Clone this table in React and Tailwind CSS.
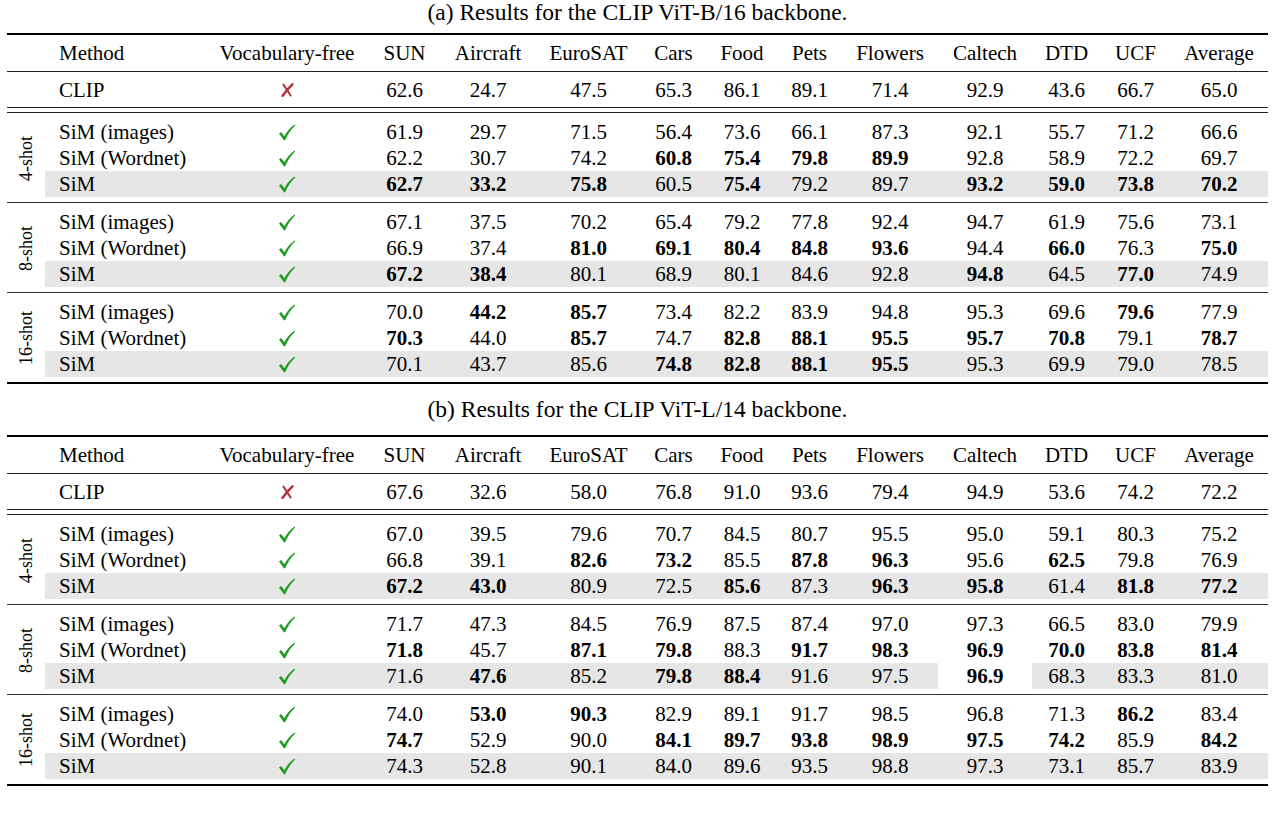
import React from "react";

const COLS =
  "grid grid-cols-[38px_159px_166px_69px_98px_103px_67px_70px_65px_96px_94px_69px_69px_98px]";
const SUBCOLS =
  "grid grid-cols-[159px_166px_69px_98px_103px_67px_70px_65px_96px_94px_69px_69px_98px]";

const HEAD = ["SUN", "Aircraft", "EuroSAT", "Cars", "Food", "Pets", "Flowers", "Caltech", "DTD", "UCF", "Average"];

const A = {
  caption: "(a) Results for the CLIP ViT-B/16 backbone.",
  clip: "62.6 24.7 47.5 65.3 86.1 89.1 71.4 92.9 43.6 66.7 65.0",
  groups: [
    {
      label: "4-shot",
      rows: [
        "61.9 29.7 71.5 56.4 73.6 66.1 87.3 92.1 55.7 71.2 66.6",
        "62.2 30.7 74.2 *60.8 *75.4 *79.8 *89.9 92.8 58.9 72.2 69.7",
        "*62.7 *33.2 *75.8 60.5 *75.4 79.2 89.7 *93.2 *59.0 *73.8 *70.2",
      ],
    },
    {
      label: "8-shot",
      rows: [
        "67.1 37.5 70.2 65.4 79.2 77.8 92.4 94.7 61.9 75.6 73.1",
        "66.9 37.4 *81.0 *69.1 *80.4 *84.8 *93.6 94.4 *66.0 76.3 *75.0",
        "*67.2 *38.4 80.1 68.9 80.1 84.6 92.8 *94.8 64.5 *77.0 74.9",
      ],
    },
    {
      label: "16-shot",
      rows: [
        "70.0 *44.2 *85.7 73.4 82.2 83.9 94.8 95.3 69.6 *79.6 77.9",
        "*70.3 44.0 *85.7 74.7 *82.8 *88.1 *95.5 *95.7 *70.8 79.1 *78.7",
        "70.1 43.7 85.6 *74.8 *82.8 *88.1 *95.5 95.3 69.9 79.0 78.5",
      ],
    },
  ],
};

const B = {
  caption: "(b) Results for the CLIP ViT-L/14 backbone.",
  clip: "67.6 32.6 58.0 76.8 91.0 93.6 79.4 94.9 53.6 74.2 72.2",
  groups: [
    {
      label: "4-shot",
      rows: [
        "67.0 39.5 79.6 70.7 84.5 80.7 95.5 95.0 59.1 80.3 75.2",
        "66.8 39.1 *82.6 *73.2 85.5 *87.8 *96.3 95.6 *62.5 79.8 76.9",
        "*67.2 *43.0 80.9 72.5 *85.6 87.3 *96.3 *95.8 61.4 *81.8 *77.2",
      ],
    },
    {
      label: "8-shot",
      rows: [
        "71.7 47.3 84.5 76.9 87.5 87.4 97.0 97.3 66.5 83.0 79.9",
        "*71.8 45.7 *87.1 *79.8 88.3 *91.7 *98.3 *96.9 *70.0 *83.8 *81.4",
        "71.6 *47.6 85.2 *79.8 *88.4 91.6 97.5 !*96.9 68.3 83.3 81.0",
      ],
    },
    {
      label: "16-shot",
      rows: [
        "74.0 *53.0 *90.3 82.9 89.1 91.7 98.5 96.8 71.3 *86.2 83.4",
        "*74.7 52.9 90.0 *84.1 *89.7 *93.8 *98.9 *97.5 *74.2 85.9 *84.2",
        "74.3 52.8 90.1 84.0 89.6 93.5 98.8 97.3 73.1 85.7 83.9",
      ],
    },
  ],
};

const NAMES = ["SiM (images)", "SiM (Wordnet)", "SiM"];

function Check() {
  return (
    <svg width="18" height="17" viewBox="0 0 18 17" className="inline-block align-middle">
      <path
        d="M1 9.6 L3.1 8.1 L6.4 12.2 C8.9 7.4 12.2 3.6 16.6 0.6 L17.2 1.6 C13.2 5.2 10 9.8 7.1 16.2 L5.9 16.2 Z"
        fill="#1e9c1e"
      />
    </svg>
  );
}

function Cross() {
  return (
    <svg width="14" height="14" viewBox="0 0 14 14" className="inline-block align-middle">
      <path d="M3.4 1.6 Q6.8 6.4 10.6 12.6" stroke="#b3303a" strokeWidth="1.9" strokeLinecap="round" fill="none" />
      <path d="M12.4 1.4 Q7.6 6 2.6 12.8" stroke="#b3303a" strokeWidth="2.5" strokeLinecap="round" fill="none" />
    </svg>
  );
}

function Cell({ v }) {
  let white = false;
  let bold = false;
  let t = v;
  if (t.startsWith("!")) {
    white = true;
    t = t.slice(1);
  }
  if (t.startsWith("*")) {
    bold = true;
    t = t.slice(1);
  }
  return (
    <div className={`h-full flex items-center justify-center ${bold ? "font-bold" : ""} ${white ? "bg-white" : ""}`}>{t}</div>
  );
}

function Table({ data, captionClass }) {
  return (
    <div>
      <div className={`${captionClass} text-center text-[23.5px] leading-[24px] text-black`}>
        {data.caption}
      </div>
      <div className="border-t-2 border-black">
        <div className={`${COLS} h-[36px] items-center`}>
          <div />
          <div className="pl-[14px]">Method</div>
          <div className="text-center">Vocabulary-free</div>
          {HEAD.map((h) => (
            <div key={h} className="text-center">
              {h}
            </div>
          ))}
        </div>
        <div className={`${COLS} h-[36px] items-center border-t border-[#222]`}>
          <div />
          <div className="pl-[14px]">CLIP</div>
          <div className="flex justify-center">
            <Cross />
          </div>
          {data.clip.split(" ").map((v, i) => (
            <Cell key={i} v={v} />
          ))}
        </div>
        <div className="h-[6px] border-t border-b border-[#222]" />
        {data.groups.map((g, gi) => (
          <div
            key={g.label}
            className={`flex pt-[6px] pb-[5px] ${gi > 0 ? "border-t border-[#333]" : ""}`}
          >
            <div className="w-[38px] flex items-center justify-center">
              <span className="[writing-mode:vertical-rl] rotate-180 text-[18px] leading-none">
                {g.label}
              </span>
            </div>
            <div className="flex flex-col">
              {g.rows.map((r, ri) => (
                <div
                  key={ri}
                  className={`${SUBCOLS} h-[26px] items-center ${ri === 2 ? "bg-[#e6e6e6]" : ""}`}
                >
                  <div className="pl-[14px]">{NAMES[ri]}</div>
                  <div className="flex justify-center">
                    <Check />
                  </div>
                  {r.split(" ").map((v, i) => (
                    <Cell key={i} v={v} />
                  ))}
                </div>
              ))}
            </div>
          </div>
        ))}
        <div className="border-t-2 border-black" />
      </div>
    </div>
  );
}

export default function App() {
  return (
    <div className="w-[1274px] h-[814px] bg-white overflow-hidden font-['Liberation_Serif',serif] text-[21px] leading-[26px] text-black">
      <div className="pl-[7px] w-[1268px]">
        <Table data={A} captionClass="h-[33px]" />
        <div className="mt-[13px]">
          <Table data={B} captionClass="h-[38px]" />
        </div>
      </div>
    </div>
  );
}
